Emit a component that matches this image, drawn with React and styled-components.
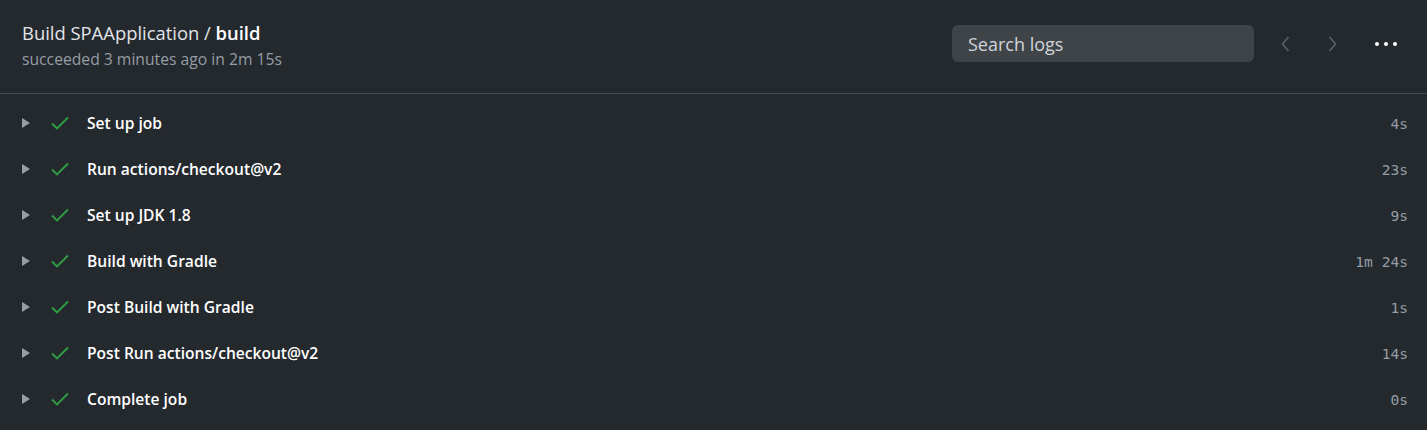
import styled, { createGlobalStyle } from "styled-components";

const GlobalStyle = createGlobalStyle`
  body {
    margin: 0;
    background: #24292e;
    font-family: "Open Sans", "Noto Sans", sans-serif;
  }
`;

const steps = [
  { name: "Set up job", time: "4s" },
  { name: "Run actions/checkout@v2", time: "23s" },
  { name: "Set up JDK 1.8", time: "9s" },
  { name: "Build with Gradle", time: "1m 24s" },
  { name: "Post Build with Gradle", time: "1s" },
  { name: "Post Run actions/checkout@v2", time: "14s" },
  { name: "Complete job", time: "0s" },
];

function App() {
  return (
    <>
      <GlobalStyle />
      <Page>
        <Header>
          <div>
            <Title>
              Build SPAApplication / <b>build</b>
            </Title>
            <Subtitle>succeeded 3 minutes ago in 2m 15s</Subtitle>
          </div>
          <Tools>
            <Search placeholder="Search logs" />
            <NavButton>
              <svg width="16" height="18" viewBox="0 0 16 18">
                <path d="M10.5 2 4.5 9l6 7" fill="none" stroke="currentColor" strokeWidth="1.7" />
              </svg>
            </NavButton>
            <NavButton>
              <svg width="16" height="18" viewBox="0 0 16 18">
                <path d="M5.5 2 11.5 9l-6 7" fill="none" stroke="currentColor" strokeWidth="1.7" />
              </svg>
            </NavButton>
            <MoreButton>
              <svg width="24" height="6" viewBox="0 0 24 6">
                <circle cx="3" cy="3" r="2" fill="currentColor" />
                <circle cx="12" cy="3" r="2" fill="currentColor" />
                <circle cx="21" cy="3" r="2" fill="currentColor" />
              </svg>
            </MoreButton>
          </Tools>
        </Header>
        <StepList>
          {steps.map((s) => (
            <Step key={s.name}>
              <Caret>
                <svg width="10" height="10" viewBox="0 0 10 10">
                  <path d="M1 0 9 5 1 10Z" fill="currentColor" />
                </svg>
              </Caret>
              <Check>
                <svg width="18" height="14" viewBox="0 0 18 14">
                  <path d="M1 7.5 6 12.5 17 1.5" fill="none" stroke="currentColor" strokeWidth="1.9" />
                </svg>
              </Check>
              <StepName>{s.name}</StepName>
              <Duration>{s.time}</Duration>
            </Step>
          ))}
        </StepList>
      </Page>
    </>
  );
}

export default App;

const Page = styled.div`
  background: #24292e;
  min-height: 430px;
`;

const Header = styled.div`
  display: flex;
  justify-content: space-between;
  align-items: flex-start;
  height: 94px;
  box-sizing: border-box;
  padding: 20px 22px 0;
  border-bottom: 1px solid #444d56;
`;

const Title = styled.div`
  color: #e1e4e8;
  font-size: 18.4px;
  line-height: 26px;
  b {
    font-weight: 600;
    color: #fff;
  }
`;

const Subtitle = styled.div`
  color: #959da5;
  font-size: 15.7px;
  line-height: 20px;
  margin-top: 3px;
`;

const Tools = styled.div`
  display: flex;
  align-items: center;
  margin: 5px -8px 0 0;
`;

const Search = styled.input`
  width: 302px;
  height: 37px;
  box-sizing: border-box;
  border: none;
  border-radius: 6px;
  background: #3f4449;
  padding: 0 16px;
  font-family: inherit;
  font-size: 18px;
  color: #e1e4e8;
  outline: none;
  margin-right: 9px;
  &::placeholder {
    color: #d1d5da;
  }
`;

const NavButton = styled.div`
  width: 46px;
  height: 32px;
  display: flex;
  align-items: center;
  justify-content: center;
  color: #586069;
`;

const MoreButton = styled.div`
  width: 54px;
  height: 32px;
  padding-left: 4px;
  display: flex;
  align-items: center;
  justify-content: center;
  color: #fff;
`;

const StepList = styled.div`
  padding-top: 6px;
`;

const Step = styled.div`
  display: flex;
  align-items: center;
  height: 46px;
  padding: 0 19px 0 21px;
`;

const Caret = styled.span`
  display: flex;
  color: #959da5;
  width: 30px;
`;

const Check = styled.span`
  display: flex;
  color: #2ea043;
  width: 36px;
`;

const StepName = styled.span`
  flex: 1;
  color: #fff;
  font-weight: 600;
  font-size: 15.6px;
`;

const Duration = styled.span`
  color: #959da5;
  font-family: "DejaVu Sans Mono", "Liberation Mono", monospace;
  font-size: 14.6px;
`;
